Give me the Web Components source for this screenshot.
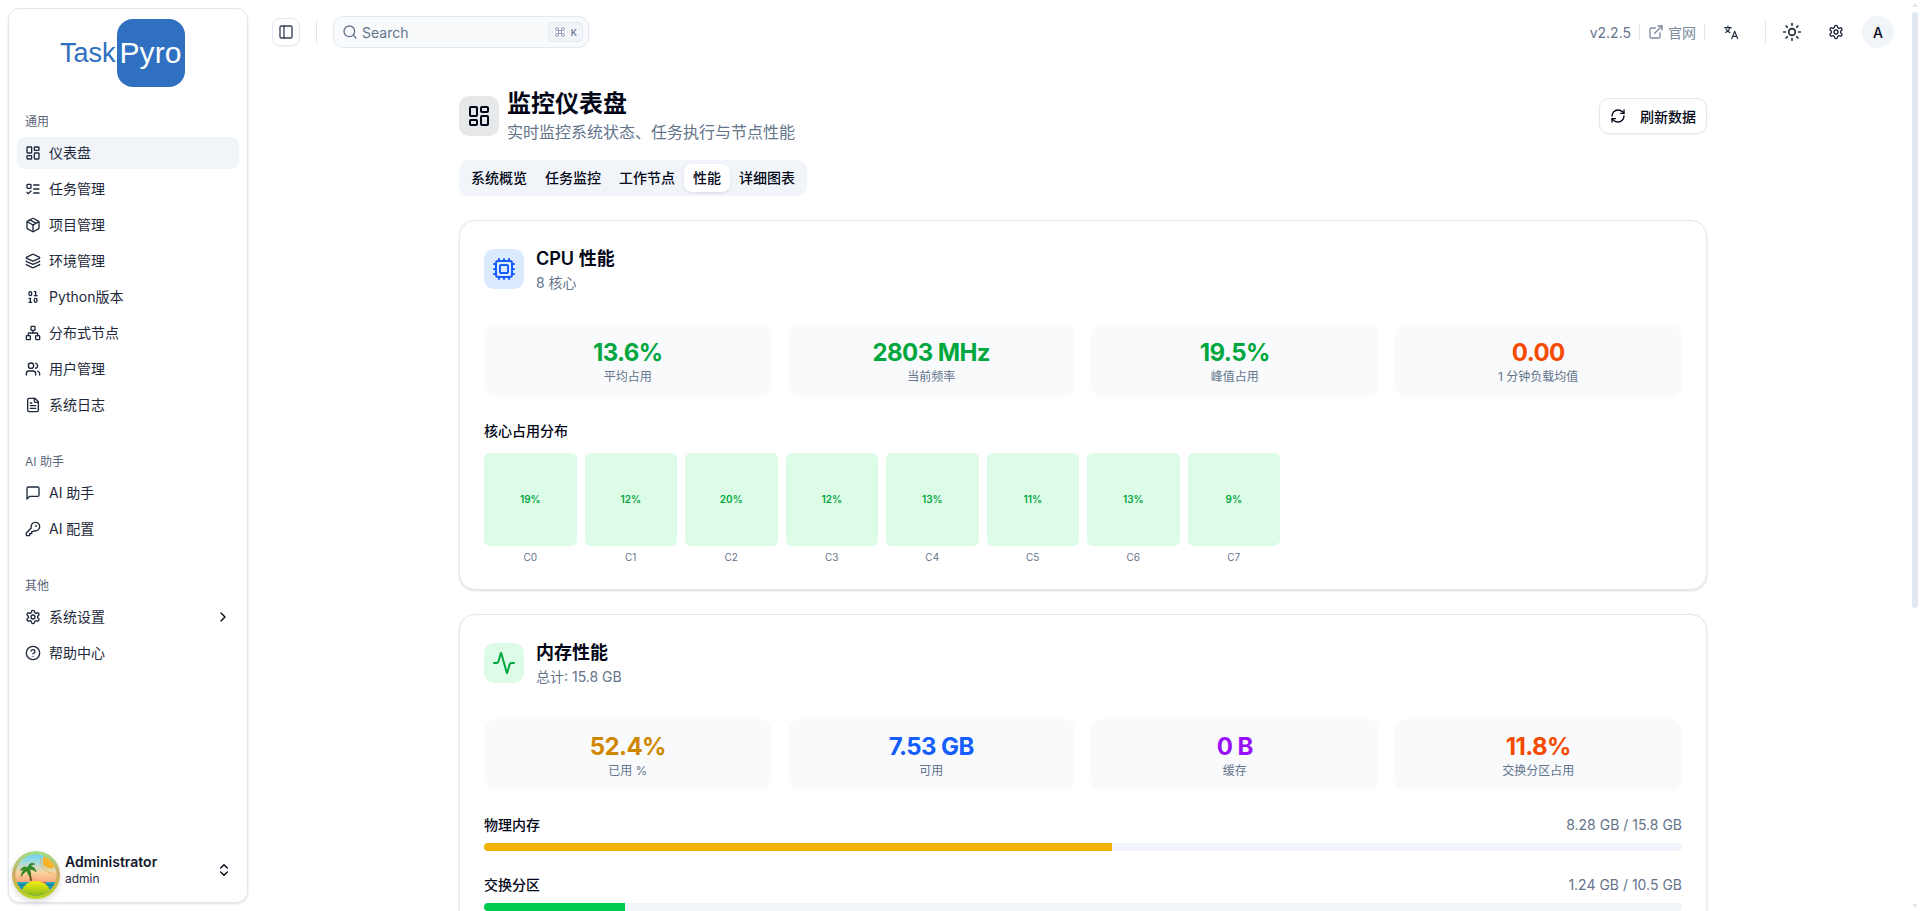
<!DOCTYPE html>
<html lang="zh-CN">
<head>
<meta charset="utf-8">
<title>TaskPyro</title>
<style>
  html, body { margin: 0; height: 100%; overflow: hidden; background: #fff; }
  body { font-family: Inter, "Noto Sans CJK SC", sans-serif; color: #020617; }
</style>
</head>
<body>
<app-shell>
  <app-sidebar slot="sidebar">
    <side-group label="通用">
      <side-item icon="dashboard" active>仪表盘</side-item>
      <side-item icon="todo">任务管理</side-item>
      <side-item icon="package">项目管理</side-item>
      <side-item icon="layers">环境管理</side-item>
      <side-item icon="binary">Python版本</side-item>
      <side-item icon="network">分布式节点</side-item>
      <side-item icon="users">用户管理</side-item>
      <side-item icon="file">系统日志</side-item>
    </side-group>
    <side-group label="AI 助手">
      <side-item icon="message">AI 助手</side-item>
      <side-item icon="key">AI 配置</side-item>
    </side-group>
    <side-group label="其他">
      <side-item icon="settings" chevron>系统设置</side-item>
      <side-item icon="help">帮助中心</side-item>
    </side-group>
  </app-sidebar>

  <top-bar slot="bar"></top-bar>

  <page-head title="监控仪表盘" sub="实时监控系统状态、任务执行与节点性能"></page-head>
  <tab-strip tabs="系统概览,任务监控,工作节点,性能,详细图表" active="性能"></tab-strip>

  <perf-card heading="CPU 性能" sub="8 核心" icon="cpu" tone="blue">
    <stat-box value="13.6%" label="平均占用" color="#00a63e"></stat-box>
    <stat-box value="2803 MHz" label="当前频率" color="#00a63e"></stat-box>
    <stat-box value="19.5%" label="峰值占用" color="#00a63e"></stat-box>
    <stat-box value="0.00" label="1 分钟负载均值" color="#f54a00"></stat-box>
    <core-grid slot="detail" heading="核心占用分布">
      <core-tile value="19%" label="C0"></core-tile>
      <core-tile value="12%" label="C1"></core-tile>
      <core-tile value="20%" label="C2"></core-tile>
      <core-tile value="12%" label="C3"></core-tile>
      <core-tile value="13%" label="C4"></core-tile>
      <core-tile value="11%" label="C5"></core-tile>
      <core-tile value="13%" label="C6"></core-tile>
      <core-tile value="9%" label="C7"></core-tile>
    </core-grid>
  </perf-card>

  <perf-card heading="内存性能" sub="总计: 15.8 GB" icon="activity" tone="green">
    <stat-box value="52.4%" label="已用 %" color="#d08700"></stat-box>
    <stat-box value="7.53 GB" label="可用" color="#155dfc"></stat-box>
    <stat-box value="0 B" label="缓存" color="#9810fa"></stat-box>
    <stat-box value="11.8%" label="交换分区占用" color="#f54a00"></stat-box>
    <usage-bar slot="detail" label="物理内存" value="8.28 GB / 15.8 GB" pct="52.4" color="#f0b100"></usage-bar>
    <usage-bar slot="detail" label="交换分区" value="1.24 GB / 10.5 GB" pct="11.8" color="#00c950"></usage-bar>
  </perf-card>
</app-shell>

<script>
// lucide style icon paths, drawn on a 24 box
const ICONS = {
  dashboard: '<rect width="7" height="9" x="3" y="3" rx="1"/><rect width="7" height="5" x="14" y="3" rx="1"/><rect width="7" height="9" x="14" y="12" rx="1"/><rect width="7" height="5" x="3" y="16" rx="1"/>',
  todo: '<rect x="3" y="5" width="6" height="6" rx="1"/><path d="m3 17 2 2 4-4"/><path d="M13 6h8"/><path d="M13 12h8"/><path d="M13 18h8"/>',
  package: '<path d="M11 21.73a2 2 0 0 0 2 0l7-4A2 2 0 0 0 21 16V8a2 2 0 0 0-1-1.73l-7-4a2 2 0 0 0-2 0l-7 4A2 2 0 0 0 3 8v8a2 2 0 0 0 1 1.73z"/><path d="M12 22V12"/><path d="m3.3 7 8.7 5 8.7-5"/><path d="m7.5 4.27 9 5.15"/>',
  layers: '<path d="M12.83 2.18a2 2 0 0 0-1.66 0L2.6 6.08a1 1 0 0 0 0 1.83l8.58 3.91a2 2 0 0 0 1.66 0l8.58-3.9a1 1 0 0 0 0-1.83Z"/><path d="M2 12a1 1 0 0 0 .58.91l8.6 3.91a2 2 0 0 0 1.65 0l8.58-3.9A1 1 0 0 0 22 12"/><path d="M2 17a1 1 0 0 0 .58.91l8.6 3.91a2 2 0 0 0 1.65 0l8.58-3.9A1 1 0 0 0 22 17"/>',
  binary: '<rect x="14" y="14" width="4" height="6" rx="2"/><rect x="6" y="4" width="4" height="6" rx="2"/><path d="M6 20h4"/><path d="M14 10h4"/><path d="M6 14h2v6"/><path d="M14 4h2v6"/>',
  network: '<rect x="16" y="16" width="6" height="6" rx="1"/><rect x="2" y="16" width="6" height="6" rx="1"/><rect x="9" y="2" width="6" height="6" rx="1"/><path d="M5 16v-3a1 1 0 0 1 1-1h12a1 1 0 0 1 1 1v3"/><path d="M12 12V8"/>',
  users: '<path d="M16 21v-2a4 4 0 0 0-4-4H6a4 4 0 0 0-4 4v2"/><circle cx="9" cy="7" r="4"/><path d="M22 21v-2a4 4 0 0 0-3-3.87"/><path d="M16 3.13a4 4 0 0 1 0 7.75"/>',
  file: '<path d="M15 2H6a2 2 0 0 0-2 2v16a2 2 0 0 0 2 2h12a2 2 0 0 0 2-2V7Z"/><path d="M14 2v4a2 2 0 0 0 2 2h4"/><path d="M10 9H8"/><path d="M16 13H8"/><path d="M16 17H8"/>',
  message: '<path d="M21 15a2 2 0 0 1-2 2H7l-4 4V5a2 2 0 0 1 2-2h14a2 2 0 0 1 2 2z"/>',
  key: '<path d="M2 18v3c0 .6.4 1 1 1h4v-3h3v-3h2l1.4-1.4a6.5 6.5 0 1 0-4-4Z"/><circle cx="16.5" cy="7.5" r=".5"/>',
  settings: '<path d="M12.22 2h-.44a2 2 0 0 0-2 2v.18a2 2 0 0 1-1 1.73l-.43.25a2 2 0 0 1-2 0l-.15-.08a2 2 0 0 0-2.73.73l-.22.38a2 2 0 0 0 .73 2.73l.15.1a2 2 0 0 1 1 1.72v.51a2 2 0 0 1-1 1.74l-.15.09a2 2 0 0 0-.73 2.73l.22.38a2 2 0 0 0 2.73.73l.15-.08a2 2 0 0 1 2 0l.43.25a2 2 0 0 1 1 1.73V20a2 2 0 0 0 2 2h.44a2 2 0 0 0 2-2v-.18a2 2 0 0 1 1-1.73l.43-.25a2 2 0 0 1 2 0l.15.08a2 2 0 0 0 2.73-.73l.22-.39a2 2 0 0 0-.73-2.73l-.15-.08a2 2 0 0 1-1-1.74v-.5a2 2 0 0 1 1-1.74l.15-.09a2 2 0 0 0 .73-2.73l-.22-.38a2 2 0 0 0-2.73-.73l-.15.08a2 2 0 0 1-2 0l-.43-.25a2 2 0 0 1-1-1.73V4a2 2 0 0 0-2-2z"/><circle cx="12" cy="12" r="3"/>',
  help: '<circle cx="12" cy="12" r="10"/><path d="M9.09 9a3 3 0 0 1 5.83 1c0 2-3 3-3 3"/><path d="M12 17h.01"/>',
  chevronRight: '<path d="m9 18 6-6-6-6"/>',
  chevronsUpDown: '<path d="m7 15 5 5 5-5"/><path d="m7 9 5-5 5 5"/>',
  panel: '<rect width="18" height="18" x="3" y="3" rx="2"/><path d="M9 3v18"/>',
  search: '<path d="m21 21-4.34-4.34"/><circle cx="11" cy="11" r="8"/>',
  command: '<path d="M15 6v12a3 3 0 1 0 3-3H6a3 3 0 1 0 3 3V6a3 3 0 1 0-3 3h12a3 3 0 1 0-3-3"/>',
  external: '<path d="M15 3h6v6"/><path d="M10 14 21 3"/><path d="M18 13v6a2 2 0 0 1-2 2H5a2 2 0 0 1-2-2V8a2 2 0 0 1 2-2h6"/>',
  translate: '<g stroke-width="1.7"><path d="M2.5 5.5h10"/><path d="M7.5 3v2.5"/><path d="M10.5 5.5c-.8 3-3 5.600-6.500 7.200"/><path d="M4.500 7.500c1.200 2.600 3 4.200 6 5.200"/><path d="m13 22 4.500-11 4.500 11"/><path d="M14.700 18.500h5.600"/></g>',
  sun: '<circle cx="12" cy="12" r="4"/><path d="M12 2v2"/><path d="M12 20v2"/><path d="m4.93 4.93 1.41 1.41"/><path d="m17.66 17.66 1.41 1.41"/><path d="M2 12h2"/><path d="M20 12h2"/><path d="m6.34 17.66-1.41 1.41"/><path d="m19.07 4.93-1.41 1.41"/>',
  refresh: '<path d="M3 12a9 9 0 0 1 9-9 9.75 9.75 0 0 1 6.74 2.74L21 8"/><path d="M21 3v5h-5"/><path d="M21 12a9 9 0 0 1-9 9 9.75 9.75 0 0 1-6.74-2.74L3 16"/><path d="M8 16H3v5"/>',
  cpu: '<path d="M12 20v2"/><path d="M12 2v2"/><path d="M17 20v2"/><path d="M17 2v2"/><path d="M2 12h2"/><path d="M2 17h2"/><path d="M2 7h2"/><path d="M20 12h2"/><path d="M20 17h2"/><path d="M20 7h2"/><path d="M7 20v2"/><path d="M7 2v2"/><rect x="4" y="4" width="16" height="16" rx="2"/><rect x="8" y="8" width="8" height="8" rx="1"/>',
  activity: '<path d="M22 12h-2.48a2 2 0 0 0-1.93 1.46l-2.35 8.36a.25.25 0 0 1-.48 0L9.24 2.18a.25.25 0 0 0-.48 0l-2.35 8.36A2 2 0 0 1 4.49 12H2"/>'
};

class LineIcon extends HTMLElement {
  connectedCallback() {
    const size = this.getAttribute('size') || 16;
    this.attachShadow({ mode: 'open' }).innerHTML = `
      <style>
        :host { display: inline-flex; flex: none; width: ${size}px; height: ${size}px; }
        svg { display: block; }
      </style>
      <svg xmlns="http://www.w3.org/2000/svg" width="${size}" height="${size}" viewBox="0 0 24 24" fill="none"
        stroke="currentColor" stroke-width="2" stroke-linecap="round" stroke-linejoin="round">${ICONS[this.getAttribute('name')] || ''}</svg>`;
  }
}
customElements.define('line-icon', LineIcon);

// the window scrollbar of the page, the screenshot browser hides real ones
class ScrollRail extends HTMLElement {
  constructor() {
    super();
    this.attachShadow({ mode: 'open' }).innerHTML = `
      <style>
        :host {
          display: flex; flex-direction: column; align-items: center; flex: none; width: 15px; height: 100%;
          box-sizing: border-box; padding: 3px 2px 3px 7px;
        }
        .up, .down { width: 6px; height: 4px; background: #e2e8f0; }
        .up { clip-path: polygon(50% 0, 100% 100%, 0 100%); }
        .down { clip-path: polygon(0 0, 100% 0, 50% 100%); margin-top: auto; }
        .thumb { width: 6px; height: 596px; margin-top: 5px; background: #e2e8f0; border-radius: 3px; }
      </style>
      <div class="up"></div><div class="thumb"></div><div class="down"></div>`;
  }
}
customElements.define('scroll-rail', ScrollRail);

class AppShell extends HTMLElement {
  constructor() {
    super();
    this.attachShadow({ mode: 'open' }).innerHTML = `
      <style>
        :host { display: flex; height: 100vh; }
        .side { flex: none; width: 256px; box-sizing: border-box; padding: 8px; height: 100%; }
        .scroller { flex: 1; min-width: 0; overflow: hidden; }
        main {
          box-sizing: border-box; width: 1248px; margin-left: 203px;
          display: flex; flex-direction: column; padding-top: 24px;
        }
        ::slotted(page-head) { margin-bottom: 16px; }
        ::slotted(tab-strip) { margin-bottom: 24px; }
        ::slotted(perf-card) { margin-bottom: 24px; }
      </style>
      <div class="side"><slot name="sidebar"></slot></div>
      <div class="scroller">
        <slot name="bar"></slot>
        <main><slot></slot></main>
      </div>
      <scroll-rail></scroll-rail>`;
  }
}
customElements.define('app-shell', AppShell);

class AppSidebar extends HTMLElement {
  constructor() {
    super();
    this.attachShadow({ mode: 'open' }).innerHTML = `
      <style>
        :host {
          display: flex; flex-direction: column; height: 100%; box-sizing: border-box;
          background: #fff; border: 1px solid #e2e8f0; border-radius: 12px;
          box-shadow: 0 1px 3px rgb(0 0 0 / .1), 0 1px 2px -1px rgb(0 0 0 / .1);
        }
        .logo { display: flex; align-items: center; gap: 1px; height: 68px; margin: 10px 0 0 51px; font-family: "Liberation Sans", Arial, sans-serif; }
        .task { color: #3070c0; font-size: 27px; }
        .pyro {
          width: 68px; height: 68px; box-sizing: border-box; background: #3070c0; color: #fff; border-radius: 16px;
          display: flex; align-items: center; justify-content: center; font-size: 30px; letter-spacing: .1px;
        }
        .groups { display: flex; flex-direction: column; gap: 8px; margin-top: 10px; }
        user-foot { margin-top: auto; }
      </style>
      <div class="logo"><span class="task">Task</span><span class="pyro">Pyro</span></div>
      <div class="groups"><slot></slot></div>
      <user-foot></user-foot>`;
  }
}
customElements.define('app-sidebar', AppSidebar);

class SideGroup extends HTMLElement {
  constructor() {
    super();
    this.attachShadow({ mode: 'open' }).innerHTML = `
      <style>
        :host { display: flex; flex-direction: column; padding: 8px; }
        .label { height: 32px; box-sizing: border-box; display: flex; align-items: center; padding: 0 8px 2px; font-size: 12px; color: #5b6678; }
        .items { display: flex; flex-direction: column; gap: 4px; }
      </style>
      <div class="label"></div>
      <div class="items"><slot></slot></div>`;
  }
  connectedCallback() {
    this.shadowRoot.querySelector('.label').textContent = this.getAttribute('label');
  }
}
customElements.define('side-group', SideGroup);

class SideItem extends HTMLElement {
  connectedCallback() {
    const chevron = this.hasAttribute('chevron')
      ? '<line-icon class="more" name="chevronRight"></line-icon>' : '';
    this.attachShadow({ mode: 'open' }).innerHTML = `
      <style>
        :host {
          display: flex; align-items: center; gap: 8px; height: 32px; padding: 0 8px; box-sizing: border-box;
          border-radius: 8px; font-size: 14px; color: #1e293b;
        }
        :host([active]) { background: #f1f5f9; }
        .text { margin-bottom: 2px; }
        .more { margin-left: auto; color: #020617; }
      </style>
      <line-icon name="${this.getAttribute('icon')}"></line-icon><span class="text"><slot></slot></span>${chevron}`;
  }
}
customElements.define('side-item', SideItem);

class UserFoot extends HTMLElement {
  constructor() {
    super();
    this.attachShadow({ mode: 'open' }).innerHTML = `
      <style>
        :host { display: flex; align-items: center; padding: 0 8px 3px 3px; gap: 5px; }
        .avatar { flex: none; width: 48px; height: 48px; border-radius: 50%; box-shadow: 0 3px 6px rgb(0 0 0 / .14); }
        svg { display: block; }
        .who { flex: 1; min-width: 0; margin-bottom: 10px; }
        .name { font-size: 14px; font-weight: 600; line-height: 18px; color: #0f172a; }
        .login { font-size: 12px; line-height: 16px; color: #1e293b; }
        line-icon { margin: 0 7px 11px 0; color: #020617; }
      </style>
      <div class="avatar">
        <svg xmlns="http://www.w3.org/2000/svg" width="48" height="48" viewBox="0 0 48 48">
          <defs>
            <linearGradient id="ring" x1="0" y1="0" x2="0" y2="1">
              <stop offset="0" stop-color="#9ce28c"/><stop offset=".5" stop-color="#cfa863"/><stop offset="1" stop-color="#b6d81a"/>
            </linearGradient>
            <linearGradient id="sky" x1="0" y1="0" x2="0" y2="1">
              <stop offset=".1" stop-color="#74d4f0"/><stop offset=".25" stop-color="#a8dcdc"/><stop offset=".45" stop-color="#f8d49c"/><stop offset=".7" stop-color="#fb9c76"/>
            </linearGradient>
            <linearGradient id="isle" x1="0" y1="0" x2="0" y2="1">
              <stop offset="0" stop-color="#f4f010"/><stop offset="1" stop-color="#2c8a22"/>
            </linearGradient>
            <clipPath id="inner"><circle cx="24" cy="24" r="20.5"/></clipPath>
          </defs>
          <circle cx="24" cy="24" r="24" fill="url(#ring)"/>
          <g clip-path="url(#inner)">
            <rect width="48" height="48" fill="url(#sky)"/>
            <circle cx="38" cy="10" r="7.5" fill="#f7b32b"/>
            <path d="M28.5 8a15 15 0 0 0 14 15" fill="none" stroke="#f39a4a" stroke-width="1.2" stroke-dasharray="1.5 1.5"/>
            <rect y="31" width="48" height="17" fill="#1fa3b8"/>
            <path d="M4 34h40M4 37h40" stroke="#0d6f86" stroke-width="1"/>
            <path d="M21 27l2 3 8 1 3 0-.5 1.5-10-1-2.5-4z" fill="#e2407a"/>
            <ellipse cx="24" cy="44" rx="15" ry="14" fill="url(#isle)"/>
          </g>
          <path d="M18 30c-.4-5-1-9-3-13l1.4-.3c2 4 3 8 3.600 13z" fill="#7a4a1e"/>
          <path d="M16 17c-3-2-6-1-7.500 2.500 2-.8 3-.8 4-.7-1.800 1.200-3.300 3.600-3.300 6.700 2-3.400 4.300-5 6-5.800.3 2.300 1 4 3 6 .8-2.800.2-5.500-.9-7.300 2.800-.4 4.700.6 6.700 2.500-.3-3.300-3.300-5.700-6-5.700 1-1.100 2.700-1.900 4.800-2-2.700-2-5.800-1-6.800 3.600z" fill="#2f8f20" stroke="#1a5c12" stroke-width=".5"/>
        </svg>
      </div>
      <div class="who"><div class="name">Administrator</div><div class="login">admin</div></div>
      <line-icon name="chevronsUpDown"></line-icon>`;
  }
}
customElements.define('user-foot', UserFoot);

class TopBar extends HTMLElement {
  constructor() {
    super();
    this.attachShadow({ mode: 'open' }).innerHTML = `
      <style>
        :host { display: flex; align-items: center; height: 64px; box-sizing: border-box; padding: 0 11px 0 16px; }
        .toggle {
          display: flex; align-items: center; justify-content: center; width: 28px; height: 28px; box-sizing: border-box;
          border: 1px solid #e2e8f0; border-radius: 8px; color: #334155; box-shadow: 0 1px 2px rgb(0 0 0 / .05);
        }
        .rule { width: 1px; background: #e2e8f0; }
        .tall { height: 24px; }
        .short { height: 16px; }
        .search {
          display: flex; align-items: center; gap: 4px; width: 256px; height: 32px; box-sizing: border-box; margin-left: 16px;
          padding: 0 5px 0 8px; background: #f8fafc; border: 1px solid #e2e8f0; border-radius: 10px;
          font-size: 14px; color: #64748b;
        }
        kbd {
          margin-left: auto; display: flex; align-items: center; gap: 5px; height: 20px; box-sizing: border-box; padding: 0 5px;
          background: #f1f5f9; border: 1px solid #e2e8f0; border-radius: 5px; font: 500 9px Inter, sans-serif; color: #64748b;
        }
        kbd line-icon { color: #94a3b8; }
        .right { margin-left: auto; display: flex; align-items: center; font-size: 14px; color: #64748b; }
        .site { display: flex; align-items: center; gap: 4px; color: #7c8aa0; }
        .dark, .lang { color: #1e293b; }
        .me {
          width: 32px; height: 32px; border-radius: 50%; background: #f1f5f9; color: #020617;
          display: flex; align-items: center; justify-content: center; font-size: 14px; font-weight: 500;
        }
      </style>
      <div class="toggle"><line-icon name="panel"></line-icon></div>
      <div class="rule tall" style="margin-left:16px"></div>
      <div class="search">
        <line-icon name="search"></line-icon><span>Search</span>
        <kbd><line-icon name="command" size="12"></line-icon>K</kbd>
      </div>
      <div class="right">
        <span>v2.2.5</span>
        <div class="rule short" style="margin:0 8px"></div>
        <div class="site"><line-icon name="external"></line-icon><span>官网</span></div>
        <div class="rule short" style="margin:0 18px 0 8px"></div>
        <line-icon class="lang" name="translate"></line-icon>
        <div class="rule tall" style="margin:0 16px 0 26px"></div>
        <line-icon class="dark" name="sun" size="20"></line-icon>
        <line-icon class="dark" name="settings" style="margin-left:26px"></line-icon>
        <div class="me" style="margin-left:18px">A</div>
      </div>`;
  }
}
customElements.define('top-bar', TopBar);

class PageHead extends HTMLElement {
  connectedCallback() {
    this.attachShadow({ mode: 'open' }).innerHTML = `
      <style>
        :host { display: flex; align-items: center; gap: 8px; }
        .badge {
          width: 40px; height: 40px; border-radius: 10px; background: #e7e8ea; color: #020617;
          display: flex; align-items: center; justify-content: center;
        }
        h1 { margin: 0; font-size: 24px; line-height: 32px; font-weight: 700; color: #020617; }
        p { margin: 0; font-size: 16px; line-height: 24px; color: #64748b; }
        .btn {
          margin-left: auto; display: flex; align-items: center; gap: 14px; height: 36px; box-sizing: border-box; padding: 0 10px;
          border: 1px solid #e2e8f0; border-radius: 10px; font-size: 14px; font-weight: 500; color: #020617;
          box-shadow: 0 1px 2px rgb(0 0 0 / .05);
        }
      </style>
      <div class="badge"><line-icon name="dashboard" size="24"></line-icon></div>
      <div><h1>${this.getAttribute('title')}</h1><p>${this.getAttribute('sub')}</p></div>
      <div class="btn"><line-icon name="refresh"></line-icon><span>刷新数据</span></div>`;
  }
}
customElements.define('page-head', PageHead);

class TabStrip extends HTMLElement {
  connectedCallback() {
    const active = this.getAttribute('active');
    const tabs = this.getAttribute('tabs').split(',').map((t) =>
      `<span class="${t === active ? 'on' : ''}">${t}</span>`).join('');
    this.attachShadow({ mode: 'open' }).innerHTML = `
      <style>
        :host {
          display: flex; align-self: flex-start; gap: 2px; padding: 4px; height: 36px; box-sizing: border-box;
          background: #f1f5f9; border-radius: 10px;
        }
        span {
          display: flex; align-items: center; padding: 0 8px 2px; border-radius: 8px;
          font-size: 14px; font-weight: 500; color: #020617;
        }
        .on { margin: 0 -1px; padding: 0 9px 2px; background: #fff; box-shadow: 0 1px 3px rgb(0 0 0 / .1); }
      </style>${tabs}`;
  }
}
customElements.define('tab-strip', TabStrip);

const TONES = {
  blue: { bg: '#dbeafe', fg: '#155dfc' },
  green: { bg: '#dcfce7', fg: '#00a63e' }
};

class PerfCard extends HTMLElement {
  connectedCallback() {
    const tone = TONES[this.getAttribute('tone')];
    this.attachShadow({ mode: 'open' }).innerHTML = `
      <style>
        :host {
          display: flex; flex-direction: column; gap: 24px; padding: 24px; box-sizing: border-box;
          background: #fff; border: 1px solid #e2e8f0; border-radius: 16px;
          box-shadow: 0 1px 3px rgb(0 0 0 / .1), 0 1px 2px -1px rgb(0 0 0 / .1);
        }
        header { display: flex; align-items: center; gap: 12px; margin-bottom: 8px; }
        .badge {
          width: 40px; height: 40px; border-radius: 10px; background: ${tone.bg}; color: ${tone.fg};
          display: flex; align-items: center; justify-content: center;
        }
        h2 { margin: 0; font-size: 18px; line-height: 28px; font-weight: 600; color: #020617; }
        p { margin: 0; font-size: 14px; line-height: 20px; color: #64748b; }
        .stats { display: grid; grid-template-columns: repeat(4, 1fr); gap: 16px; }
      </style>
      <header>
        <div class="badge"><line-icon name="${this.getAttribute('icon')}" size="24"></line-icon></div>
        <div><h2>${this.getAttribute('heading')}</h2><p>${this.getAttribute('sub')}</p></div>
      </header>
      <div class="stats"><slot></slot></div>
      <slot name="detail"></slot>`;
  }
}
customElements.define('perf-card', PerfCard);

class StatBox extends HTMLElement {
  connectedCallback() {
    this.attachShadow({ mode: 'open' }).innerHTML = `
      <style>
        :host {
          display: block; padding: 12px; background: #f8fafc; border-radius: 12px; text-align: center;
        }
        .v { font-size: 24px; line-height: 32px; font-weight: 700; letter-spacing: -.025em; color: ${this.getAttribute('color')}; }
        .l { font-size: 12px; line-height: 16px; color: #64748b; }
      </style>
      <div class="v">${this.getAttribute('value')}</div>
      <div class="l">${this.getAttribute('label')}</div>`;
  }
}
customElements.define('stat-box', StatBox);

class CoreGrid extends HTMLElement {
  connectedCallback() {
    this.attachShadow({ mode: 'open' }).innerHTML = `
      <style>
        :host { display: block; }
        h3 { margin: 0 0 12px; font-size: 14px; line-height: 20px; font-weight: 500; color: #020617; }
        .grid { display: grid; grid-template-columns: repeat(12, 1fr); gap: 8px; }
      </style>
      <h3>${this.getAttribute('heading')}</h3>
      <div class="grid"><slot></slot></div>`;
  }
}
customElements.define('core-grid', CoreGrid);

class CoreTile extends HTMLElement {
  connectedCallback() {
    this.attachShadow({ mode: 'open' }).innerHTML = `
      <style>
        :host { display: flex; flex-direction: column; gap: 4px; text-align: center; }
        .tile {
          aspect-ratio: 1; border-radius: 6px; background: #dcfce7; color: #00a63e;
          display: flex; align-items: center; justify-content: center; font-size: 10px; font-weight: 600;
        }
        .name { font-size: 10px; line-height: 15px; color: #64748b; }
      </style>
      <div class="tile">${this.getAttribute('value')}</div>
      <div class="name">${this.getAttribute('label')}</div>`;
  }
}
customElements.define('core-tile', CoreTile);

class UsageBar extends HTMLElement {
  connectedCallback() {
    this.attachShadow({ mode: 'open' }).innerHTML = `
      <style>
        :host { display: block; }
        .row { display: flex; justify-content: space-between; margin-bottom: 8px; font-size: 14px; line-height: 20px; }
        .name { font-weight: 500; color: #020617; }
        .val { color: #64748b; }
        .track { height: 8px; border-radius: 999px; background: #f1f5f9; overflow: hidden; }
        .fill { height: 100%; width: ${this.getAttribute('pct')}%; background: ${this.getAttribute('color')}; }
      </style>
      <div class="row"><span class="name">${this.getAttribute('label')}</span><span class="val">${this.getAttribute('value')}</span></div>
      <div class="track"><div class="fill"></div></div>`;
  }
}
customElements.define('usage-bar', UsageBar);
</script>
</body>
</html>
